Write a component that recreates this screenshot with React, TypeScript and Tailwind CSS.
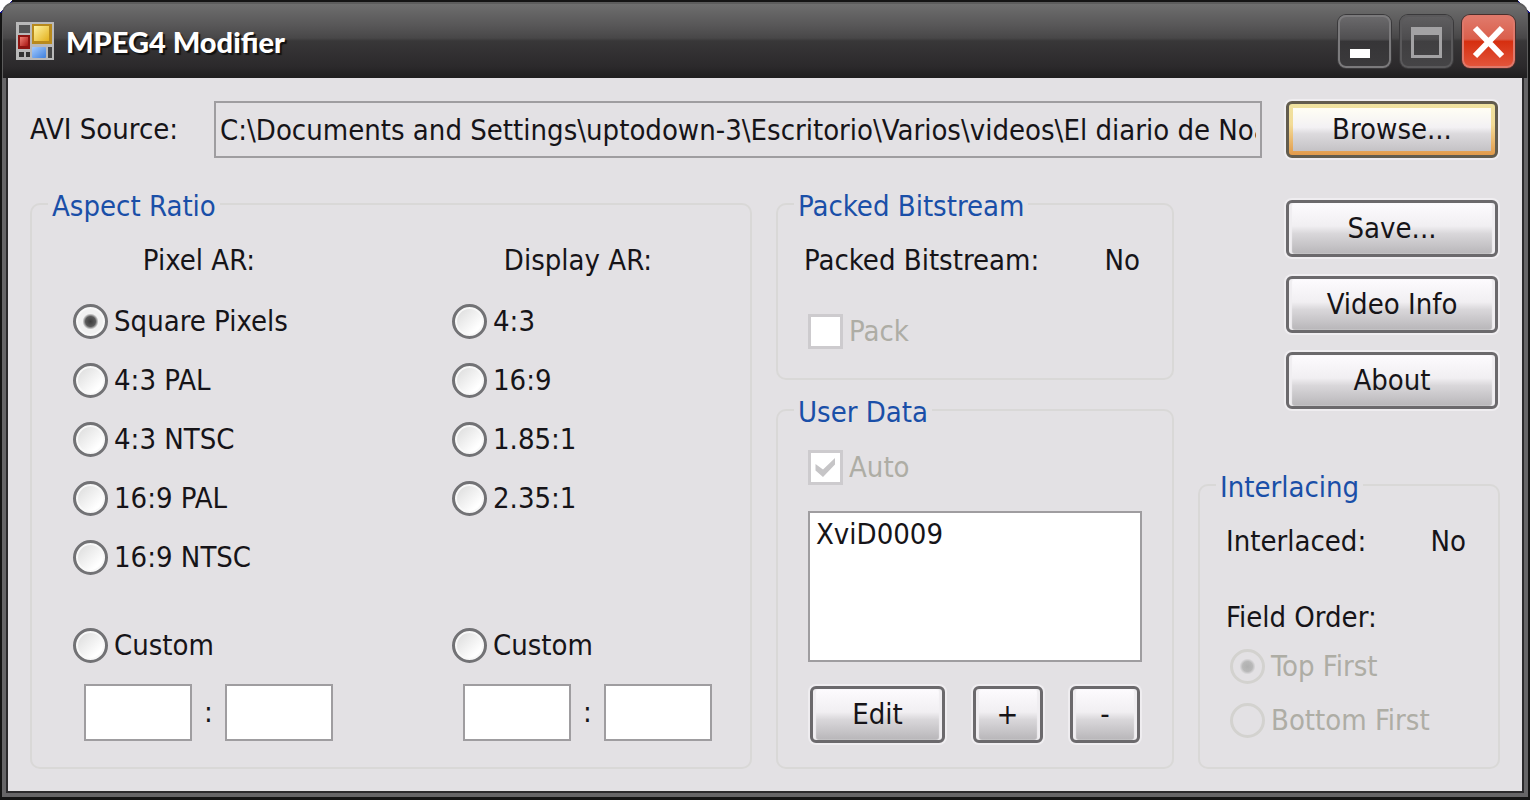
import { useState } from 'react'
import type { ReactNode } from 'react'

const pixelRatios = ['Square Pixels', '4:3 PAL', '4:3 NTSC', '16:9 PAL', '16:9 NTSC']
const displayRatios = ['4:3', '16:9', '1.85:1', '2.35:1']

interface GroupProps {
  title: string
  className?: string
  bodyClassName: string
  children: ReactNode
}

function Group({ title, className = '', bodyClassName, children }: GroupProps) {
  return (
    <fieldset className={`flex min-w-0 flex-col rounded-[10px] border-2 border-[#d9d8d7] ${className}`}>
      <legend className="ml-4 px-1 pt-1 leading-8 text-[#1a4fa8]">{title}</legend>
      <div className={`flex-1 ${bodyClassName}`}>{children}</div>
    </fieldset>
  )
}

interface RadioProps {
  name: string
  label: string
  checked: boolean
  disabled?: boolean
  onSelect?: () => void
}

function Radio({ name, label, checked, disabled, onSelect }: RadioProps) {
  return (
    <label className={`flex h-[35px] items-center gap-1.5 whitespace-nowrap ${disabled ? 'text-[#aeada5]' : ''}`}>
      <input
        type="radio"
        name={name}
        checked={checked}
        disabled={disabled}
        onChange={onSelect}
        className="size-[35px] shrink-0 appearance-none rounded-full border-[3px] border-[#727275] bg-[linear-gradient(135deg,#d8d8d8,#ffffff_75%)] shadow-[inset_0_0_0_2px_#f8f8f8] checked:bg-[radial-gradient(circle,#3c3c3c_0,#5a5a5a_5px,#f1f1f1_8px)] disabled:border-[#d3d2cf] disabled:bg-none disabled:shadow-none disabled:checked:bg-[radial-gradient(circle,#b0b0b0_0,#b8b8b8_5px,#e3e1e4_8px)]"
      />
      {label}
    </label>
  )
}

function Check({ label, checked }: { label: string; checked: boolean }) {
  return (
    <label className="flex h-[35px] items-center gap-1.5 pl-1 text-[#aeada5]">
      <span className="relative size-[35px]">
        <input
          type="checkbox"
          defaultChecked={checked}
          disabled
          className="block size-full appearance-none border-[3px] border-[#cdcbce] bg-white"
        />
        {checked && (
          <svg viewBox="0 0 35 35" className="absolute inset-0" fill="#c6c5c7">
            <path d="M7.500 14v6.500l7.500 6.500L27 14.500V8L15 19.500z" />
          </svg>
        )}
      </span>
      {label}
    </label>
  )
}

function Button({ className, children }: { className: string; children: ReactNode }) {
  return (
    <button
      type="button"
      className={`h-[57px] rounded-md border-[3px] border-[#6b696c] bg-[linear-gradient(#fdfbfe,#f1eff2_45%,#d9d7da_60%,#b8b6b9)] shadow-[0_0_0_2px_#efedf0,inset_3px_0_1px_#f0eef1,inset_-3px_0_1px_#f0eef1] ${className}`}
    >
      {children}
    </button>
  )
}

interface RatioColumnProps {
  title: string
  name: string
  options: string[]
  initial: string
}

function RatioColumn({ title, name, options, initial }: RatioColumnProps) {
  const [value, setValue] = useState(initial)

  return (
    <div className="flex flex-col pt-5 pb-[26px]">
      <p className="pr-2 text-center leading-9">{title}</p>
      <div className="mt-[26px] flex flex-col gap-6">
        {options.map((option) => (
          <Radio key={option} name={name} label={option} checked={value === option} onSelect={() => setValue(option)} />
        ))}
      </div>
      <div className="mt-auto">
        <Radio name={name} label="Custom" checked={value === 'Custom'} onSelect={() => setValue('Custom')} />
        <div className="mt-[21px] flex items-center pl-[11px]">
          <input aria-label={`${title} width`} className="h-[57px] w-[108px] border-2 border-[#9f9da0] bg-white px-1" />
          <span className="w-[33px] text-center">:</span>
          <input aria-label={`${title} height`} className="h-[57px] w-[108px] border-2 border-[#9f9da0] bg-white px-1" />
        </div>
      </div>
    </div>
  )
}

function AppIcon() {
  return (
    <svg viewBox="0 0 38 38" className="size-[38px]">
      <defs>
        <linearGradient id="yellow" x1="0" y1="0" x2="1" y2="1">
          <stop offset="0" stopColor="#fff3a0" />
          <stop offset="1" stopColor="#e3b01c" />
        </linearGradient>
        <linearGradient id="red" x1="0" y1="0" x2="1" y2="1">
          <stop offset="0" stopColor="#f08074" />
          <stop offset="1" stopColor="#a81410" />
        </linearGradient>
        <linearGradient id="blue" x1="0" y1="0" x2="1" y2="1">
          <stop offset="0" stopColor="#a4cbff" />
          <stop offset="1" stopColor="#3f80dc" />
        </linearGradient>
      </defs>
      <rect width="38" height="38" fill="#b9b9b9" />
      <rect x="3" y="3" width="11" height="8" fill="#555" />
      <rect x="2" y="13" width="12" height="14" fill="#8e1410" />
      <rect x="4" y="15" width="8" height="9" fill="url(#red)" />
      <rect x="16" y="2" width="20" height="20" fill="#b88a1c" />
      <rect x="18" y="4" width="15" height="15" fill="url(#yellow)" />
      <rect x="3" y="30" width="5" height="5" fill="#333" />
      <rect x="10" y="30" width="4" height="5" fill="#333" />
      <rect x="16" y="25" width="14" height="11" rx="1" fill="url(#blue)" />
      <rect x="32" y="25" width="4" height="11" fill="#444" />
    </svg>
  )
}

function TitleBar() {
  return (
    <header className="flex h-[76px] items-center rounded-t-xl border-x border-t-2 border-[#5c5c5c] bg-[linear-gradient(#6e6e6e,#575657_30%,#484748_46%,#383738_50%,#2b292b_85%,#1f1e1f)] pr-3 pl-[13px]">
      <AppIcon />
      <h1 className="ml-3 flex-1 pt-0.5 font-['Lato'] text-[29px] font-black text-white [text-shadow:2px_2px_1px_#111]">MPEG4 Modifier</h1>
      <div className="flex gap-[9px]">
        <button type="button" aria-label="Minimize" className="size-[53px] rounded-lg border-2 border-[#7b7a7c] bg-[linear-gradient(#6a696b,#504f51_45%,#363537_50%,#3b3a3c)] shadow-[0_0_0_1px_#3a393b]">
          <svg viewBox="0 0 49 49" className="size-full">
            <rect x="10" y="32" width="20" height="9" fill="#fff" />
          </svg>
        </button>
        <button type="button" aria-label="Maximize" className="size-[53px] rounded-lg border-2 border-[#5a595b] bg-[linear-gradient(#5f5e60,#4d4c4e_45%,#403f41_50%,#454446)] shadow-[0_0_0_1px_#3a393b]">
          <svg viewBox="0 0 49 49" className="size-full">
            <path d="M9 10h31v31H9zM12 18v20h25V18z" fill="#a3a2a4" fillRule="evenodd" />
          </svg>
        </button>
        <button type="button" aria-label="Close" className="size-[53px] rounded-lg border-2 border-[#e0786a] bg-[linear-gradient(#e0796a,#da5f4c_45%,#d62f10_50%,#e2543a)] shadow-[0_0_0_1px_#4a2f2c]">
          <svg viewBox="0 0 49 49" className="size-full">
            <path d="M11 11L38 39M38 11L11 39" stroke="#fff" strokeWidth="6" />
          </svg>
        </button>
      </div>
    </header>
  )
}

export default function App() {
  return (
    <div className="relative flex min-h-screen flex-col bg-[#141414] p-0.5 pb-[3px] font-['DejaVu_Sans_Condensed','DejaVu_Sans',sans-serif] text-[29px] text-[#161418] [font-stretch:condensed]">
      {/* Desktop showing behind the rounded corners */}
      <div className="absolute top-0 left-0 h-[13px] w-3 bg-[linear-gradient(135deg,#fff_50%,#10108a_50%)]" />
      <div className="absolute top-0 right-0 h-[13px] w-3 bg-[linear-gradient(225deg,#fff_50%,#10108a_50%)]" />

      <div className="relative flex flex-1 flex-col">
        <TitleBar />

        <main className="flex flex-1 flex-col border-x-4 border-b-4 border-[#666567] bg-[#2b2a2c] px-0.5 pb-0.5">
          <div className="flex flex-1 flex-col bg-[#e3e1e4] px-[22px] pt-[23px] pb-[22px]">
            <div className="flex items-center pr-0.5">
              <label htmlFor="source" className="w-[184px] shrink-0">AVI Source:</label>
              <input
                id="source"
                readOnly
                value="C:\Documents and Settings\uptodown-3\Escritorio\Varios\videos\El diario de Noa.avi"
                className="h-[57px] min-w-0 flex-1 border-2 border-[#9f9da0] bg-[#e3e1e4] px-1"
              />
              <button
                type="button"
                className="ml-6 h-[57px] w-[212px] rounded-md border-[3px] border-[#625c4e] bg-[linear-gradient(#efe2a0,#f3dc98_40%,#e29a4a)] p-1 shadow-[0_0_0_2px_#efedf0]"
              >
                <span className="flex h-full items-center justify-center bg-[linear-gradient(#fffef4,#f3f1f4_45%,#dcdadd_60%,#c4c2c5)]">Browse...</span>
              </button>
            </div>

            <div className="mt-7 grid flex-1 grid-cols-[722fr_398fr_302fr] gap-6">
              <Group title="Aspect Ratio" bodyClassName="flex justify-between pl-[41px] pr-[38px]">
                <RatioColumn title="Pixel AR:" name="pixel" options={pixelRatios} initial="Square Pixels" />
                <RatioColumn title="Display AR:" name="display" options={displayRatios} initial="" />
              </Group>

              <div className="flex flex-col gap-3">
                <Group title="Packed Bitstream" bodyClassName="pr-8 pb-[29px] pl-[26px]">
                  <div className="mt-5 flex justify-between leading-9">
                    <span>Packed Bitstream:</span>
                    <span>No</span>
                  </div>
                  <div className="mt-9">
                    <Check label="Pack" checked={false} />
                  </div>
                </Group>

                <Group title="User Data" className="flex-1" bodyClassName="pr-[30px] pl-[26px]">
                  <div className="mt-[22px]">
                    <Check label="Auto" checked />
                  </div>
                  <div className="mt-[26px] pl-1">
                    <select aria-label="User data" size={3} className="block h-[151px] w-full appearance-none overflow-hidden border-2 border-[#9f9da0] bg-white bg-none px-0 text-[29px]">
                      <option className="px-1.5 py-1 leading-8">XviD0009</option>
                    </select>
                    <div className="mt-6 flex justify-between px-0.5">
                      <Button className="w-[135px]">Edit</Button>
                      <Button className="w-[70px]">+</Button>
                      <Button className="w-[70px]">-</Button>
                    </div>
                  </div>
                </Group>
              </div>

              <div className="flex flex-col">
                <div className="flex flex-col items-end gap-[19px] pt-[14px] pr-0.5">
                  <Button className="w-[212px]">Save...</Button>
                  <Button className="w-[212px]">Video Info</Button>
                  <Button className="w-[212px]">About</Button>
                </div>
                <Group title="Interlacing" className="mt-[58px] flex-1" bodyClassName="pr-8 pl-[26px]">
                  <div className="mt-5 flex justify-between leading-9">
                    <span>Interlaced:</span>
                    <span>No</span>
                  </div>
                  <p className="mt-10 leading-9">Field Order:</p>
                  <div className="mt-[14px] flex flex-col gap-[19px] pl-1">
                    <Radio name="field" label="Top First" checked disabled />
                    <Radio name="field" label="Bottom First" checked={false} disabled />
                  </div>
                </Group>
              </div>
            </div>
          </div>
        </main>
      </div>
    </div>
  )
}
